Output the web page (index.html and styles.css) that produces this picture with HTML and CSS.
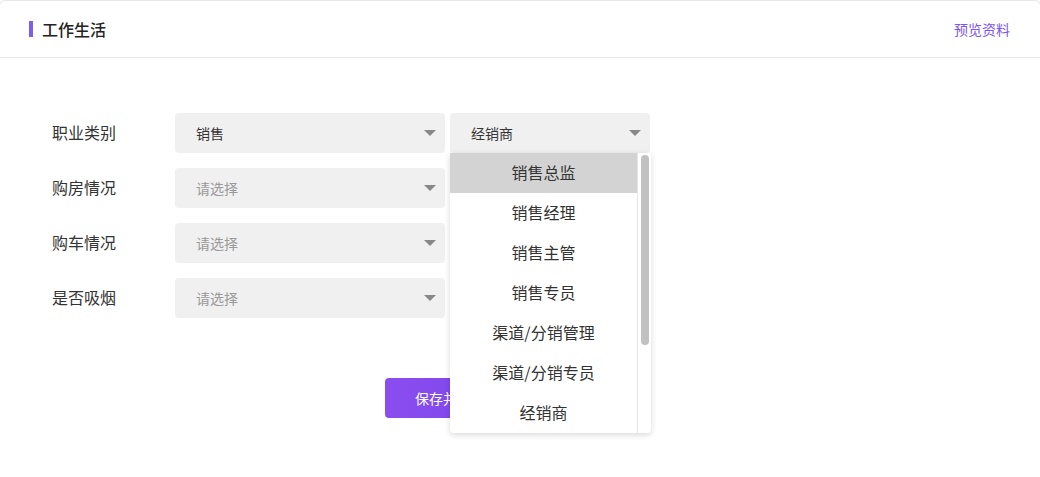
FILE: index.html
```html
<!DOCTYPE html>
<html lang="zh-CN">
<head>
<meta charset="utf-8">
<title>工作生活</title>
<link rel="stylesheet" href="styles.css">
</head>
<body>
<div class="card">
  <div class="card-head">
    <div class="title"><span class="bar"></span>工作生活</div>
    <a class="preview">预览资料</a>
  </div>
  <div class="form">
    <div class="row">
      <div class="label">职业类别</div>
      <div class="select wide"><span class="value">销售</span><span class="arrow"></span></div>
      <div class="select-wrap">
        <div class="select narrow"><span class="value">经销商</span><span class="arrow"></span></div>
        <div class="dropdown">
          <ul class="options">
            <li class="active">销售总监</li>
            <li>销售经理</li>
            <li>销售主管</li>
            <li>销售专员</li>
            <li>渠道/分销管理</li>
            <li>渠道/分销专员</li>
            <li>经销商</li>
          </ul>
          <div class="scrollbar"><div class="thumb"></div></div>
        </div>
      </div>
    </div>
    <div class="row">
      <div class="label">购房情况</div>
      <div class="select wide"><span class="value placeholder">请选择</span><span class="arrow"></span></div>
    </div>
    <div class="row">
      <div class="label">购车情况</div>
      <div class="select wide"><span class="value placeholder">请选择</span><span class="arrow"></span></div>
    </div>
    <div class="row">
      <div class="label">是否吸烟</div>
      <div class="select wide"><span class="value placeholder">请选择</span><span class="arrow"></span></div>
    </div>
    <div class="actions">
      <button class="btn">保存并继续</button>
    </div>
  </div>
</div>
</body>
</html>
```
FILE: styles.css
```css
* { box-sizing: border-box; }
html, body { margin: 0; padding: 0; background: #fff; }
body {
  font-family: "Noto Sans CJK SC", "Noto Sans", sans-serif;
  color: #333;
  overflow: hidden;
}
.card {
  margin: 0 -1px;
  border: 1px solid #e8e8e8;
  border-bottom: none;
  border-radius: 6px 6px 0 0;
  height: 478px;
}
.card-head {
  height: 57px;
  border-bottom: 1px solid #ebebeb;
  display: flex;
  align-items: center;
  justify-content: space-between;
  padding: 0 30px 1px 29px;
}
.title {
  display: flex;
  align-items: center;
  font-size: 16px;
  font-weight: 500;
  color: #222;
  line-height: 16px;
}
.bar {
  width: 4px;
  height: 16px;
  background: #7b5cf5;
  margin-right: 9px;
}
.preview {
  font-size: 14px;
  color: #7b55ee;
  cursor: pointer;
}
.form {
  padding: 55px 0 0 52px;
}
.row {
  display: flex;
  align-items: center;
  height: 40px;
  margin-bottom: 15px;
}
.label {
  width: 123px;
  font-size: 16px;
  color: #333;
  padding-bottom: 2px;
}
.select {
  height: 40px;
  background: #f0f0f0;
  border-radius: 4px;
  display: flex;
  align-items: center;
  justify-content: space-between;
  padding: 0 9px 1px 21px;
  font-size: 14px;
}
.select.wide { width: 270px; }
.select.narrow { width: 200px; }
.select-wrap {
  position: relative;
  margin-left: 5px;
}
.value { color: #333; }
.value.placeholder { color: #999; }
.arrow {
  width: 0;
  height: 0;
  border-left: 6px solid transparent;
  border-right: 6px solid transparent;
  border-top: 6px solid #888;
}
.dropdown {
  position: absolute;
  top: 40px;
  left: 0;
  width: 201px;
  height: 280px;
  background: #fff;
  box-shadow: 0 2px 6px rgba(0, 0, 0, 0.15);
  border-radius: 0 0 4px 4px;
  display: flex;
  z-index: 10;
  overflow: hidden;
}
.options {
  list-style: none;
  margin: 0;
  padding: 0;
  flex: 1;
}
.options li {
  height: 40px;
  line-height: 38px;
  text-align: center;
  font-size: 16px;
  color: #333;
}
.options li.active { background: #d3d3d3; }
.scrollbar {
  width: 14px;
  border-left: 1px solid #e6e6e6;
  padding: 2px 2px 0 3px;
}
.thumb {
  height: 190px;
  background: #c1c1c1;
  border-radius: 5px;
}
.actions {
  padding: 45px 0 0 333px;
}
.btn {
  width: 130px;
  height: 40px;
  border: none;
  border-radius: 4px;
  background: linear-gradient(90deg, #8b4df0, #7a46e8);
  color: #fff;
  font-size: 14px;
  font-family: inherit;
  padding-bottom: 2px;
}
```
